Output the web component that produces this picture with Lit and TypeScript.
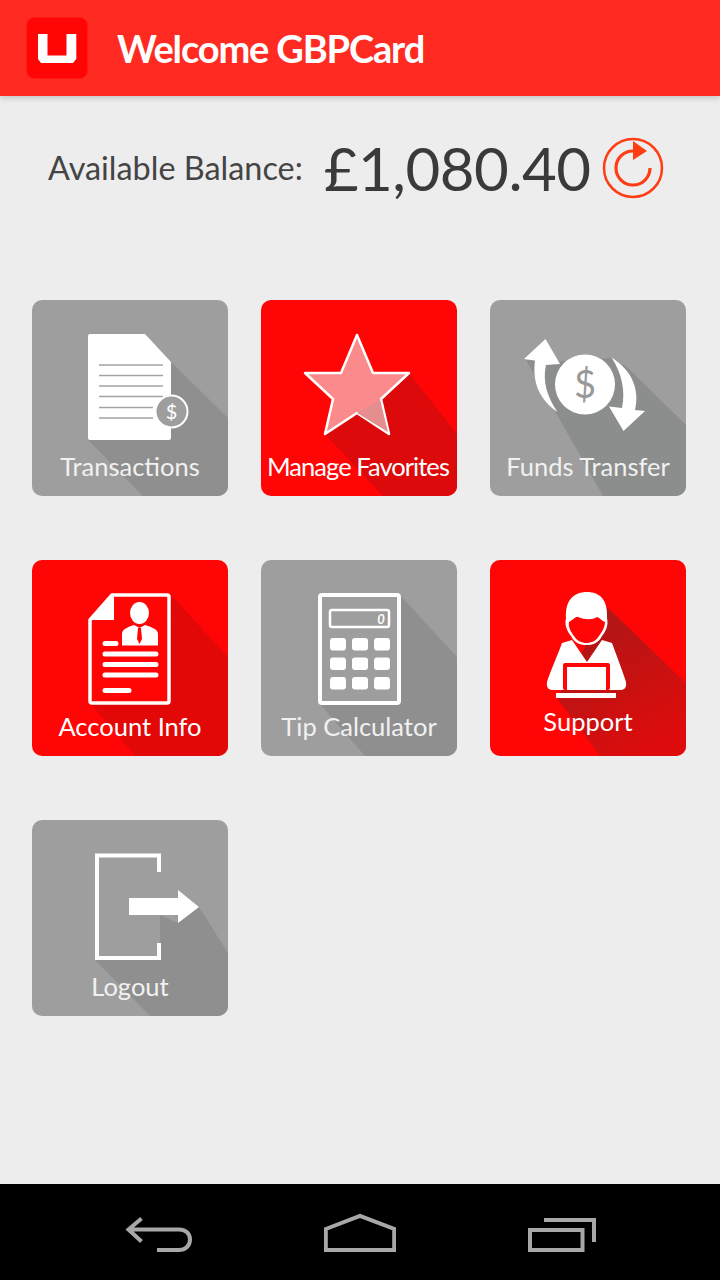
import { LitElement, html, css, svg } from "lit";
import { customElement } from "lit/decorators.js";
import { classMap } from "lit/directives/class-map.js";

// 196x196 artwork per tile: long shadow first, then the glyph on top
const icons = {
  transactions: svg`
    <polygon class="shade" points="139,62 196,118 196,196 111,196 56,140"/>
    <path fill="#fff" d="M58 34H113L139 62V138a2 2 0 0 1-2 2H58a2 2 0 0 1-2-2V36a2 2 0 0 1 2-2Z"/>
    <path stroke="#a3a3a3" stroke-width="1.5" d="M67 65H131M67 75.500H131M67 86H131M67 96.500H131M67 107.500H121M67 118H121"/>
    <circle cx="139.500" cy="111.500" r="16" fill="#9e9e9e" stroke="#fff" stroke-width="2"/>
    <text x="139.500" y="118.500" class="glyph" font-size="20" fill="#fff">$</text>`,
  favorites: svg`
    <polygon class="shade-red" points="148,73 196,134 196,196 122,196 64,134"/>
    <polygon fill="#fa8a8c" stroke="#fff" stroke-width="2.500" stroke-linejoin="round"
      points="96,35 112,73 148,73 120,99 128,134 96,113 64,134 72,99 44,73 80,73"/>
    <polygon fill="#e48e90" points="119,100 96,113 127,132"/>`,
  transfer: svg`
    <polygon class="shade-cool" points="36,60 56,62 122,58 137,67 196,125 196,196 113,196"/>
    <path fill="#fff" d="M55.500 39 34 59 45 60.500C42 83 50 100 67.500 112 58 98 52 82 56 65L70 64Z"/>
    <path fill="#fff" d="M121.500 57.500C131 72 136 90 132 108L119 106.500 133.500 131 155 111 145 110C150 90 142 70 121.500 57.500Z"/>
    <circle cx="95" cy="84.500" r="30" fill="#fff"/>
    <text x="95" y="98" class="glyph" font-size="38" fill="#999">$</text>`,
  account: svg`
    <polygon class="shade-soft" points="139,35 196,97 196,196 103,196 60,145"/>
    <path fill="#ff0505" stroke="#fff" stroke-width="3.500" stroke-linejoin="round"
      d="M80 35H135a2 2 0 0 1 2 2V141a2 2 0 0 1-2 2H60a2 2 0 0 1-2-2V60Z"/>
    <polygon fill="#fff" points="80,35 58,60 82,60 82,35"/>
    <ellipse cx="107.500" cy="53" rx="9.500" ry="11" fill="#fff"/>
    <path fill="#fff" d="M90 85.500V74C90 69 96 67 102 65L107.500 68 113 65C119 67 126 69 126 74V85.500Z"/>
    <path fill="#ff0505" d="M106 68H109L110 79 107.500 84 105 79Z"/>
    <path stroke="#fff" stroke-width="5" stroke-linecap="round" d="M73 83.500H84M73 94H124M73 104.500H124M73 115H124M73 130.500H97"/>`,
  calculator: svg`
    <polygon class="shade" points="139,35 196,97 196,196 104,196 59,144"/>
    <rect x="59" y="35" width="79" height="108" rx="2" fill="#9e9e9e" stroke="#fff" stroke-width="4"/>
    <rect x="69" y="50" width="59" height="17" rx="2" fill="none" stroke="#fff" stroke-width="2.500"/>
    <text x="120" y="63.500" class="glyph" font-size="13" font-style="italic" font-weight="700" fill="#fff">0</text>
    <g fill="#fff">
      <rect x="69" y="78" width="16" height="12.500" rx="3"/><rect x="91" y="78" width="16" height="12.500" rx="3"/><rect x="113" y="78" width="16" height="12.500" rx="3"/>
      <rect x="69" y="97.500" width="16" height="12.500" rx="3"/><rect x="91" y="97.500" width="16" height="12.500" rx="3"/><rect x="113" y="97.500" width="16" height="12.500" rx="3"/>
      <rect x="69" y="117" width="16" height="12.500" rx="3"/><rect x="91" y="117" width="16" height="12.500" rx="3"/><rect x="113" y="117" width="16" height="12.500" rx="3"/>
    </g>`,
  support: svg`
    <polygon class="shade-deep" points="117,47 196,123 196,196 110,196 67,138"/>
    <path fill="#fff" d="M76 58C75 40 84 32 97 32 110 32 118 40 117 58 119 66 115 72 112 76 108 84 102 85 96.500 85 91 85 85 84 81 76 78 72 74 66 76 58Z"/>
    <path fill="#ff0505" d="M79 62C83 60 86 56 88 57 95 60 103 60 107 57 110 58 112 61 115 62 115 67 112 72 109 76 106 81 101 83 96.500 83 92 83 87 81 84 76 81 72 78 67 79 62Z"/>
    <path fill="#fff" d="M72 83 82 80 97 102 112 80 122 83C127 97 133 112 136 122 137 129 133 130 130 130H63C60 130 56 129 57 122 60 112 67 97 72 83Z"/>
    <rect x="73" y="103" width="47" height="27" rx="2" fill="#ff0505"/>
    <rect x="77" y="107" width="39" height="23" fill="#fff"/>
    <rect x="66" y="133" width="60" height="5" fill="#fff"/>`,
  logout: svg`
    <polygon class="shade" points="167,87 196,133 196,196 118,196 63,140 128,140 128,95 146,103"/>
    <path fill="none" stroke="#fff" stroke-width="4" d="M127 52V35.500H65V138H127V123"/>
    <polygon fill="#fff" points="97,78 146,78 146,70 167,87 146,103 146,95 97,95"/>`,
};

const tiles = [
  { label: "Transactions", icon: icons.transactions, red: false },
  { label: "Manage Favorites", icon: icons.favorites, red: true, tight: true },
  { label: "Funds Transfer", icon: icons.transfer, red: false },
  { label: "Account Info", icon: icons.account, red: true },
  { label: "Tip Calculator", icon: icons.calculator, red: false },
  { label: "Support", icon: icons.support, red: true, raised: true },
  { label: "Logout", icon: icons.logout, red: false },
];

@customElement("app-root")
export class AppRoot extends LitElement {
  static styles = css`
    :host {
      display: flex;
      flex-direction: column;
      height: 1280px;
      background: #ededed;
      font-family: Lato, "Open Sans", sans-serif;
    }

    .toolbar {
      display: flex;
      align-items: center;
      gap: 29px;
      height: 96px;
      padding-left: 26px;
      background: #ff2b22;
      box-shadow: 0 2px 6px rgba(0, 0, 0, 0.18);
      flex: none;
    }

    .logo {
      display: block;
    }

    .title {
      color: #fff;
      font-size: 38px;
      font-weight: 700;
      letter-spacing: -1.15px;
    }

    .balance {
      display: flex;
      align-items: center;
      height: 144px;
      padding-left: 48px;
      color: #3a3a3a;
      flex: none;
    }

    .balance-label {
      font-size: 32.4px;
      line-height: 40px;
      color: #444;
    }

    .amount {
      margin-left: 21px;
      font-size: 60px;
      letter-spacing: -0.5px;
    }

    .refresh {
      display: block;
      margin-left: 10px;
    }

    .grid {
      display: grid;
      grid-template-columns: repeat(3, 196px);
      column-gap: 33px;
      row-gap: 64px;
      padding: 60px 32px 0;
      flex: 1;
      align-content: start;
    }

    .tile {
      position: relative;
      display: flex;
      align-items: flex-end;
      justify-content: center;
      height: 196px;
      border-radius: 10px;
      overflow: hidden;
      background: #9e9e9e;
    }

    .tile.red {
      background: #ff0505;
    }

    .art {
      position: absolute;
      inset: 0;
    }

    .shade {
      fill: #8f8f8f;
    }

    .shade-cool {
      fill: #8c8e8e;
    }

    .shade-red {
      fill: #dc0a0a;
    }

    .shade-soft {
      fill: #e30808;
    }

    .shade-deep {
      fill: url(#deep);
    }

    .glyph {
      font-family: Lato, sans-serif;
      text-anchor: middle;
    }

    .label {
      position: relative;
      padding-bottom: 15px;
      color: #f1f1f1;
      font-size: 25.5px;
      line-height: 30px;
      white-space: nowrap;
    }

    .red .label {
      color: #fff;
    }

    .label.raised {
      padding-bottom: 20px;
    }

    .label.tight {
      letter-spacing: -0.95px;
      margin-left: -2px;
    }

    .navbar {
      display: flex;
      justify-content: space-between;
      align-items: center;
      height: 96px;
      padding: 0 124px;
      background: #000;
      flex: none;
    }

    .navbar svg {
      display: block;
      fill: none;
      stroke: #a8a8a8;
      stroke-width: 4;
    }
  `;

  protected render() {
    return html`
      <div class="toolbar">
        <svg class="logo" width="62" height="62" viewBox="0 0 62 62">
          <rect x="0.500" y="0.500" width="61" height="61" rx="8" fill="#ff0505" stroke="#ff1a14"/>
          <path fill="#fff" d="M12 17H21.500V38.500H40.500V17H50.300V42L47 46H15L12 42Z"/>
        </svg>
        <span class="title">Welcome GBPCard</span>
      </div>

      <div class="balance">
        <span class="balance-label">Available Balance:</span>
        <span class="amount">£1,080.40</span>
        <svg class="refresh" width="64" height="64" viewBox="0 0 64 64" fill="none" stroke="#ff3d14">
          <circle cx="32" cy="32" r="29" stroke-width="2.500"/>
          <path stroke-width="3.200" d="M49 32A17 17 0 1 1 32 15"/>
          <polygon fill="#ff3d14" stroke="none" points="32,5 46,15 32,24"/>
        </svg>
      </div>

      <div class="grid">
        ${tiles.map(
          (t) => html`
            <div class=${classMap({ tile: true, red: t.red })}>
              <svg class="art" width="196" height="196" viewBox="0 0 196 196">
                <defs>
                  <linearGradient id="deep" x1="0.300" y1="0.100" x2="0.800" y2="0.900">
                    <stop offset="0" stop-color="#b01616"/>
                    <stop offset="1" stop-color="#de0c0c"/>
                  </linearGradient>
                </defs>
                ${t.icon}
              </svg>
              <span class=${classMap({ label: true, raised: !!t.raised, tight: !!t.tight })}>${t.label}</span>
            </div>
          `
        )}
      </div>

      <div class="navbar">
        <svg width="72" height="48" viewBox="124 1208 72 48">
          <path d="M141.500 1218.500 128.500 1229.500 141.500 1241.500M129 1229.500H179C185 1229.500 190 1233 190 1239.500S185 1250 179 1250H157"/>
        </svg>
        <svg width="72" height="48" viewBox="324 1208 72 48">
          <path d="M325.800 1229 360 1216 394.200 1229V1250H325.800Z"/>
        </svg>
        <svg width="72" height="48" viewBox="524 1208 72 48">
          <path d="M530 1230H582.500V1250H530ZM544 1220H594V1242"/>
        </svg>
      </div>
    `;
  }
}

declare global {
  interface HTMLElementTagNameMap {
    "app-root": AppRoot;
  }
}
